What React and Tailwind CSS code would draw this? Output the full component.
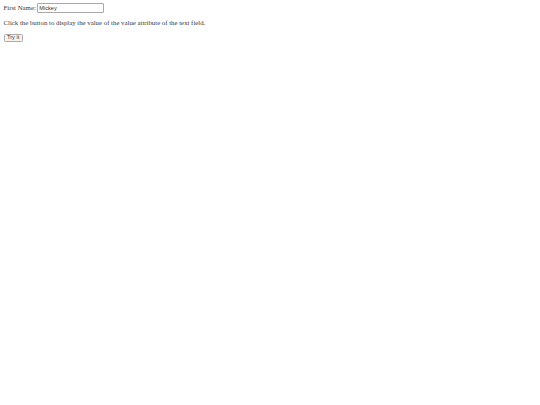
import React from 'react';

const App = () =>
{
    return (
        <div className="min-h-screen bg-white px-[3.5px] pt-[3px] text-[#3a3a3a]">
            <div className="flex items-center h-[10px] font-['Liberation_Serif',serif] text-[6.8px]">
                <span>First Name:</span>
                <input
                    type="text"
                    defaultValue="Mickey"
                    className="ml-[1.5px] w-[67px] h-[9.5px] border border-[#a8a8a8] rounded-[1px] px-[1px] font-['Liberation_Sans',sans-serif] text-[5.6px] text-[#333] leading-none outline-none"
                />
            </div>
            <p className="mt-[5.5px] mb-[7px] font-['Liberation_Serif',serif] text-[6.8px] leading-[8px]">
                Click the button to display the value of the value attribute of the text field.
            </p>
            <button
                type="button"
                className="block h-[8.5px] px-[2.5px] border border-[#aaaaaa] rounded-[1.5px] bg-[#f3f3f3] font-['Liberation_Sans',sans-serif] text-[5.6px] text-[#333] leading-none"
            >
                Try it
            </button>
        </div>
    );
};

export default App;
